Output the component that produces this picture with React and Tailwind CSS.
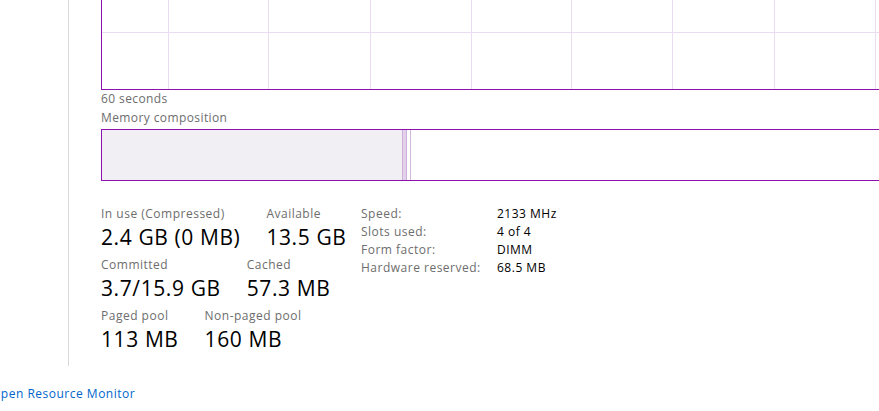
import React from "react";

const GRID = "#ecdcf2";

const stats = [
  [
    ["In use (Compressed)", "2.4 GB (0 MB)"],
    ["Available", "13.5 GB"],
  ],
  [
    ["Committed", "3.7/15.9 GB"],
    ["Cached", "57.3 MB"],
  ],
  [
    ["Paged pool", "113 MB"],
    ["Non-paged pool", "160 MB"],
  ],
];

const details = [
  ["Speed:", "2133 MHz"],
  ["Slots used:", "4 of 4"],
  ["Form factor:", "DIMM"],
  ["Hardware reserved:", "68.5 MB"],
];

const gridX = [66, 166, 268, 369, 469, 570, 672, 773];

const UsageGraph = () => (
  <div className="relative h-[90px] w-[820px] border-l border-b border-[#8b12ae]">
    <svg className="absolute inset-0" width="819" height="89">
      <line x1="0" y1="32.5" x2="819" y2="32.5" stroke={GRID} strokeWidth="1" />
      {gridX.map((x) => (
        <line key={x} x1={x + 0.5} y1="0" x2={x + 0.5} y2="89" stroke={GRID} strokeWidth="1" />
      ))}
    </svg>
  </div>
);

const Composition = () => (
  <div className="flex h-[52px] w-[820px] border border-[#8b12ae]">
    <div className="w-[300px] bg-[#f2eff4]" />
    <div className="w-[1px] bg-[#cfb0da]" />
    <div className="w-[3px] bg-[#e3d0ea]" />
    <div className="w-[1px] bg-[#cfb0da]" />
    <div className="w-[3px]" />
    <div className="w-[1px] bg-[#d4b6de]" />
    <div className="flex-1" />
  </div>
);

export default function App() {
  return (
    <div
      className="relative h-[411px] w-[879px] overflow-hidden bg-white text-[#000]"
      style={{ fontFamily: '"Open Sans", "Noto Sans", sans-serif' }}
    >
      <div className="flex h-[366px]">
        <div className="w-[69px] shrink-0 border-r border-[#d9d9d9]" />
        <div className="flex flex-col pl-[32px]">
          <UsageGraph />
          <div className="mt-[1px] text-[12px] leading-[16px] tracking-[0.4px] text-[#6d6d6d]">60 seconds</div>
          <div className="mt-[3px] text-[12px] leading-[16px] tracking-[0.4px] text-[#6d6d6d]">Memory composition</div>
          <div className="mt-[3px]">
            <Composition />
          </div>

          <div className="mt-[25px] flex items-start">
            <div className="w-[260px] shrink-0">
              {stats.map((row, i) => (
                <div key={i} className="mb-[8px] flex gap-[26px]">
                  {row.map(([label, value]) => (
                    <div key={label} className="flex flex-col">
                      <div className="text-[12px] leading-[16px] tracking-[0.5px] text-[#6d6d6d]">{label}</div>
                      <div className="mt-[3px] text-[21px] leading-[24px] tracking-[0.6px] text-[#000]">{value}</div>
                    </div>
                  ))}
                </div>
              ))}
            </div>
            <div className="-mt-[1px] grid grid-cols-[136px_auto] content-start text-[12px] leading-[18px] tracking-[0.5px]">
              {details.map(([label, value]) => (
                <React.Fragment key={label}>
                  <div className="text-[#6d6d6d]">{label}</div>
                  <div className="text-[#000]">{value}</div>
                </React.Fragment>
              ))}
            </div>
          </div>
        </div>
      </div>
      <div className="-ml-[9px] mt-[20px] text-[12px] leading-[16px] tracking-[0.5px] text-[#0066cc]">
        Open Resource Monitor
      </div>
    </div>
  );
}
